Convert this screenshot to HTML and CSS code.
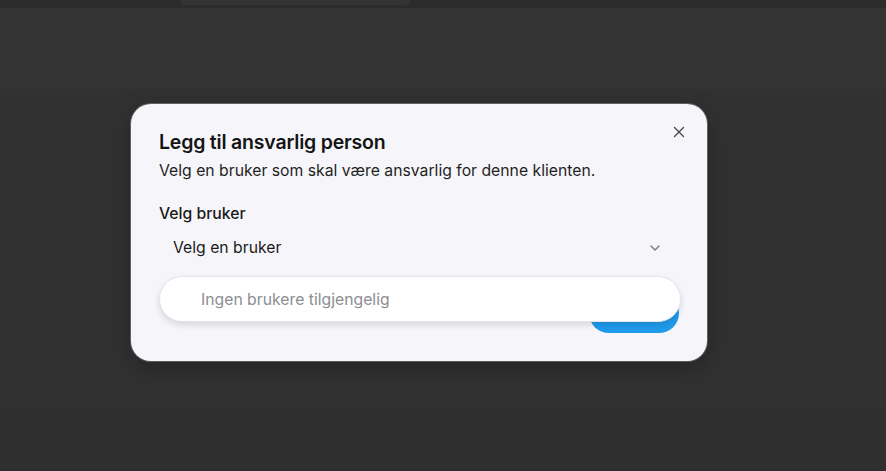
FILE: index.html
```html
<!DOCTYPE html>
<html lang="no">
<head>
<meta charset="utf-8">
<title>Legg til ansvarlig person</title>
<link rel="stylesheet" href="styles.css">
</head>
<body>
  <div class="topbar"><div class="tab"></div></div>
  <div class="band"></div>
  <div class="stage">
    <div class="modal" role="dialog">
      <button class="close" aria-label="Lukk">
        <svg viewBox="0 0 12 12" width="12" height="12"><path d="M1.5 1.5L10.5 10.5M10.5 1.5L1.5 10.5" stroke="#4a4a4a" stroke-width="1.4" stroke-linecap="round" fill="none"/></svg>
      </button>
      <h2 class="title">Legg til ansvarlig person</h2>
      <p class="subtitle">Velg en bruker som skal være ansvarlig for denne klienten.</p>
      <div class="label">Velg bruker</div>
      <div class="select">
        <span>Velg en bruker</span>
        <svg class="chev" viewBox="0 0 10 6" width="10" height="6"><path d="M1 1L5 5L9 1" stroke="#7a7a7a" stroke-width="1.4" stroke-linecap="round" stroke-linejoin="round" fill="none"/></svg>
      </div>
      <div class="footer">
        <button class="primary">Legg til</button>
      </div>
      <div class="popup">Ingen brukere tilgjengelig</div>
    </div>
  </div>
  <div class="bottom"></div>
</body>
</html>
```
FILE: styles.css
```css
* { box-sizing: border-box; }
html, body { margin: 0; padding: 0; }
body {
  background: #313131;
  font-family: Inter, "Noto Sans", "Liberation Sans", sans-serif;
  width: 886px;
  height: 471px;
  overflow: hidden;
}
.topbar {
  height: 8px;
  background: #2c2c2c;
  padding-left: 180px;
}
.tab {
  width: 230px;
  height: 5px;
  background: #343434;
  border-radius: 0 0 6px 6px;
}
.band {
  height: 81px;
  background: #333333;
}
.stage {
  height: 319px;
  background: #313131;
  padding: 15px 0 0 131px;
}
.bottom {
  height: 63px;
  background: #2f2f2f;
}
.modal {
  position: relative;
  width: 576px;
  height: 257px;
  background: #f6f6fa;
  border-radius: 20px;
  padding: 24px 28px 28px;
  display: flex;
  flex-direction: column;
  box-shadow: 0 0 0 1px rgba(190,195,200,0.35), 0 8px 24px rgba(0,0,0,0.25);
}
.close {
  position: absolute;
  top: 22px;
  right: 22px;
  width: 12px;
  height: 12px;
  padding: 0;
  border: 0;
  background: none;
  display: flex;
}
.title {
  margin: 0;
  font-size: 19.5px;
  line-height: 28px;
  font-weight: 600;
  color: #141414;
  letter-spacing: -0.2px;
}
.subtitle {
  margin: 5px 0 0;
  font-size: 15.75px;
  line-height: 20px;
  color: #1f1f1f;
}
.label {
  margin-top: 23px;
  font-size: 15.75px;
  line-height: 20px;
  font-weight: 500;
  color: #1a1a1a;
}
.select {
  margin-top: 4px;
  height: 40px;
  display: flex;
  align-items: center;
  justify-content: space-between;
  padding: 0 19px 0 14px;
  font-size: 15.75px;
  line-height: 20px;
  color: #1a1a1a;
}
.chev { display: block; }
.footer {
  margin-top: auto;
  display: flex;
  justify-content: flex-end;
}
.primary {
  width: 90px;
  height: 40px;
  border: 0;
  border-radius: 20px;
  background: #1f9bea;
  color: #fff;
  font-family: inherit;
  font-size: 15px;
  font-weight: 500;
  padding: 0 0 6px;
}
.popup {
  position: absolute;
  top: 172px;
  left: 28px;
  right: 26px;
  height: 46px;
  background: #ffffff;
  border: 1px solid #e3e5ea;
  border-radius: 23px;
  box-shadow: 0 3px 6px rgba(0,0,0,0.12);
  display: flex;
  align-items: center;
  padding-left: 41px;
  font-size: 15.75px;
  color: #8d8d92;
}
```
